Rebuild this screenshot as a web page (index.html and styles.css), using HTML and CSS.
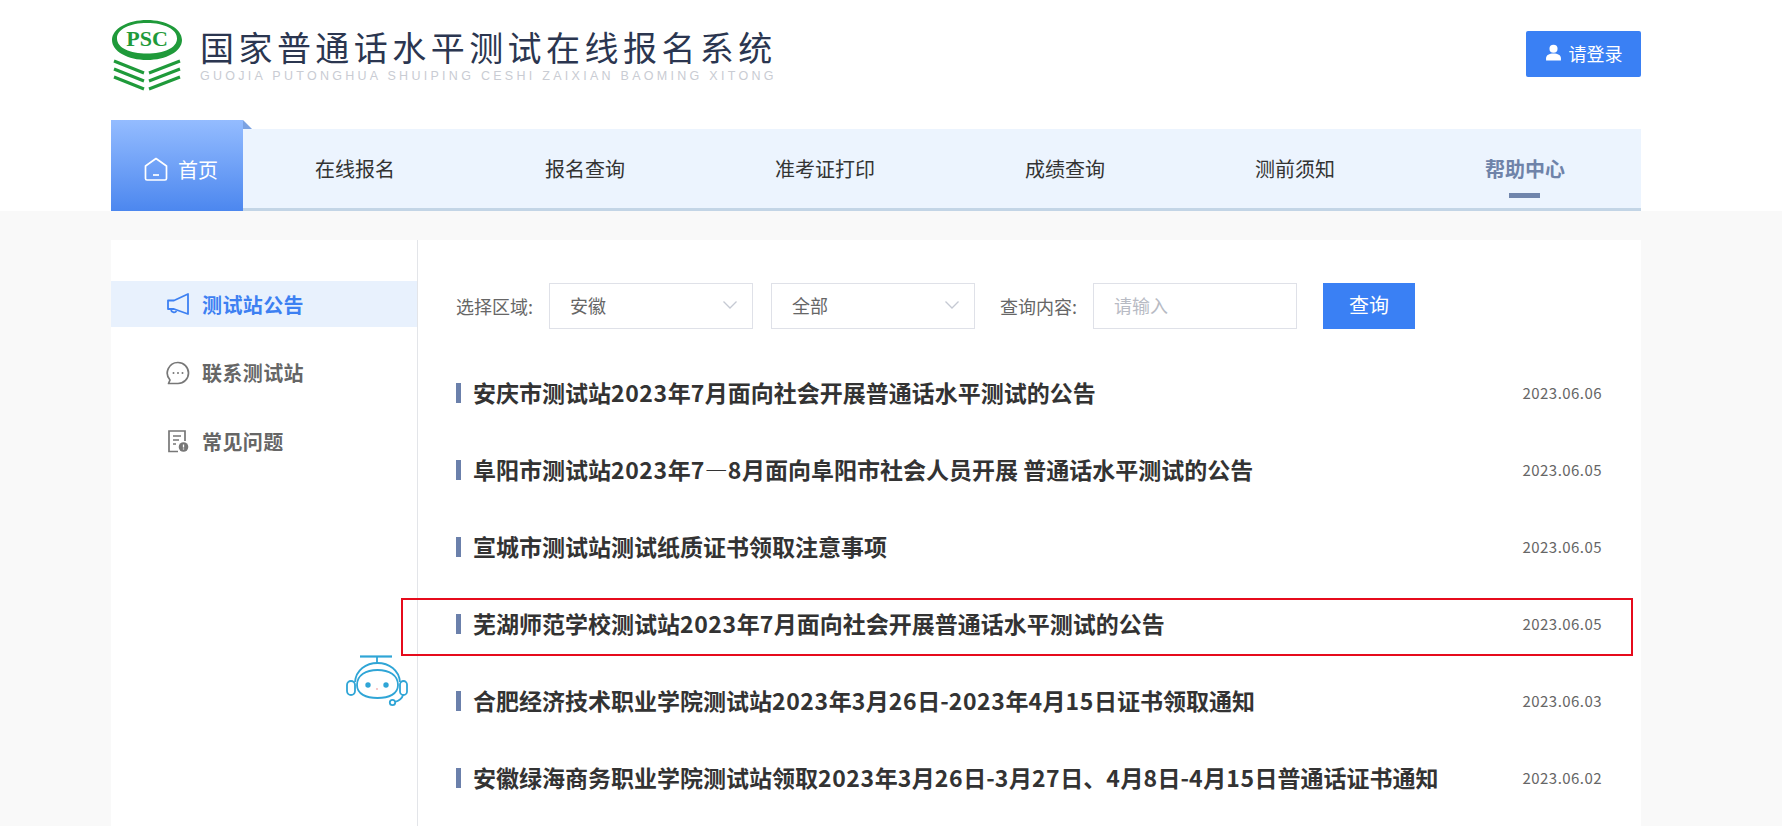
FILE: index.html
```html
<!DOCTYPE html>
<html lang="zh-CN">
<head>
<meta charset="utf-8">
<title>国家普通话水平测试在线报名系统</title>
<link rel="stylesheet" href="styles.css">
</head>
<body>
<header class="header">
  <div class="wrap">
    <div class="topbar">
      <div class="brand">
        <svg class="brand-mark" viewBox="0 0 72 72" width="72" height="72" aria-hidden="true">
          <path fill-rule="evenodd" fill="#1f9a3a" d="M36 1C17 1 1 9.500 1 21s16 20 35 20 35-8.500 35-20S55 1 36 1zm0 3c17 0 30 6 30 15.500S53 34.500 36 34.500 6 29 6 19.500 19 4 36 4z"/>
          <text class="brand-psc" x="36" y="27" text-anchor="middle">PSC</text>
          <g fill="none" stroke="#1f9a3a" stroke-width="3">
            <path d="M3 42l30 12M3 50l30 12M3 58l30 12M69 42L38 54M69 50L38 62M69 58L38 70"/>
          </g>
        </svg>
        <div class="brand-text">
          <div class="brand-cn">国家普通话水平测试在线报名系统</div>
          <div class="brand-en">GUOJIA PUTONGHUA SHUIPING CESHI ZAIXIAN BAOMING XITONG</div>
        </div>
      </div>
      <a class="login">
        <svg viewBox="0 0 16 16" width="17" height="17" aria-hidden="true"><circle cx="8" cy="4.500" r="3.800" fill="#fff"/><path fill="#fff" d="M1 15.500v-2C1 10.500 4 9 8 9s7 1.500 7 4.500v2z"/></svg>
        <span>请登录</span>
      </a>
    </div>
    <nav class="nav">
      <a class="nav-home">
        <svg viewBox="0 0 24 24" width="24" height="24" fill="none" stroke="#fff" stroke-width="1.700" aria-hidden="true"><path d="M12 1.500l10.500 7.500v12.500a1.500 1.500 0 0 1-1.500 1.500H3a1.500 1.500 0 0 1-1.500-1.500V9z" stroke-linejoin="round"/><path d="M9 18h6"/></svg>
        <span>首页</span>
      </a>
      <div class="nav-bar">
        <a class="nav-item">在线报名</a>
        <a class="nav-item">报名查询</a>
        <a class="nav-item">准考证打印</a>
        <a class="nav-item">成绩查询</a>
        <a class="nav-item">测前须知</a>
        <a class="nav-item nav-item-active">帮助中心</a>
      </div>
    </nav>
  </div>
</header>
<main class="wrap card">
  <aside class="side">
    <a class="side-item side-item-active">
      <svg viewBox="0 0 24 24" width="24" height="24" fill="none" stroke="#3d80f2" stroke-width="1.800" aria-hidden="true"><path d="M22 2v20L8 17H2V8.500h6z" stroke-linejoin="round"/><path d="M5 17.500a3 3 0 0 0 5.500 1.500"/></svg>
      <span>测试站公告</span>
    </a>
    <a class="side-item">
      <svg viewBox="0 0 24 24" width="24" height="24" fill="none" stroke="#777" stroke-width="1.700" aria-hidden="true"><path d="M12 1.500a10.500 10.500 0 1 1 0 21H2.500l1.500-3.500A10.500 10.500 0 0 1 12 1.500z" stroke-linejoin="round"/><g fill="#777" stroke="none"><circle cx="7.500" cy="12" r="1"/><circle cx="12" cy="12" r="1"/><circle cx="16.500" cy="12" r="1"/></g></svg>
      <span>联系测试站</span>
    </a>
    <a class="side-item">
      <svg viewBox="0 0 24 24" width="24" height="24" fill="none" stroke="#777" stroke-width="1.700" aria-hidden="true"><path d="M12 22.500H3V2h16v10"/><path d="M7 7h8M7 11h6M7 15h3"/><circle cx="17.500" cy="18" r="4.800" fill="#777" stroke="none"/><path d="M17.500 15.500v3M17.500 19.500v1" stroke="#fff" stroke-width="1.300"/></svg>
      <span>常见问题</span>
    </a>
  </aside>
  <section class="content">
    <form class="search">
      <label class="search-label">选择区域:</label>
      <div class="select">
        <span>安徽</span>
        <svg viewBox="0 0 14 8" width="14" height="8" fill="none" stroke="#c5c9d3" stroke-width="1.300" aria-hidden="true"><path d="M.5.500L7 7l6.500-6.500"/></svg>
      </div>
      <div class="select">
        <span>全部</span>
        <svg viewBox="0 0 14 8" width="14" height="8" fill="none" stroke="#c5c9d3" stroke-width="1.300" aria-hidden="true"><path d="M.5.500L7 7l6.500-6.500"/></svg>
      </div>
      <label class="search-label search-label-query">查询内容:</label>
      <input class="search-input" placeholder="请输入">
      <button class="search-btn" type="button">查询</button>
    </form>
    <ul class="list">
      <li class="row"><span class="row-title">安庆市测试站<span class="num">2023</span>年<span class="num">7</span>月面向社会开展普通话水平测试的公告</span><span class="row-date">2023.06.06</span></li>
      <li class="row"><span class="row-title">阜阳市测试站<span class="num">2023</span>年<span class="num">7</span>—<span class="num">8</span>月面向阜阳市社会人员开展 普通话水平测试的公告</span><span class="row-date">2023.06.05</span></li>
      <li class="row"><span class="row-title">宣城市测试站测试纸质证书领取注意事项</span><span class="row-date">2023.06.05</span></li>
      <li class="row"><span class="row-title">芜湖师范学校测试站<span class="num">2023</span>年<span class="num">7</span>月面向社会开展普通话水平测试的公告</span><span class="row-date">2023.06.05</span></li>
      <li class="row"><span class="row-title">合肥经济技术职业学院测试站<span class="num">2023</span>年<span class="num">3</span>月<span class="num">26</span>日-<span class="num">2023</span>年<span class="num">4</span>月<span class="num">15</span>日证书领取通知</span><span class="row-date">2023.06.03</span></li>
      <li class="row"><span class="row-title">安徽绿海商务职业学院测试站领取<span class="num">2023</span>年<span class="num">3</span>月<span class="num">26</span>日-<span class="num">3</span>月<span class="num">27</span>日、<span class="num">4</span>月<span class="num">8</span>日-<span class="num">4</span>月<span class="num">15</span>日普通话证书通知</span><span class="row-date">2023.06.02</span></li>
    </ul>
  </section>
</main>
<div class="highlight"></div>
<svg class="robot" viewBox="0 0 62 52" width="62" height="52" fill="none" stroke="#2fa5d6" stroke-width="1.800" aria-hidden="true">
  <path d="M14 1.500h32" stroke-width="2.200"/>
  <path d="M31 2v6"/>
  <path d="M9 27C10 15 20 8 31.500 8S53 15 54 27"/>
  <path d="M11 30C11 20 20 15 31.500 15S52 20 52 30C52 39 43 43 31.500 43S11 39 11 30z"/>
  <rect x="1" y="26" width="8" height="14" rx="4"/>
  <rect x="54" y="26" width="7" height="14" rx="3.500"/>
  <path d="M57 40C56 44 52 46 49 47"/>
  <circle cx="46.500" cy="47.500" r="2.700"/>
  <g fill="#2fa5d6" stroke="none"><circle cx="22" cy="30" r="2.700"/><circle cx="40" cy="30" r="2.700"/></g>
  <circle cx="31" cy="34" r="1" fill="#f5b5b5" stroke="none"/>
</svg>
</body>
</html>
```
FILE: styles.css
```css
* { box-sizing: border-box; }
html, body { margin: 0; height: 100%; overflow: hidden; }
body {
  background: #f9f9f9;
  font-family: "Noto Sans CJK SC", "Noto Sans", sans-serif;
  color: #333;
  position: relative;
}
ul { margin: 0; padding: 0; list-style: none; }
.wrap { width: 1530px; margin-left: 111px; }
.header { background: #fff; height: 211px; }
.topbar { height: 120px; display: flex; justify-content: space-between; align-items: flex-start; }
.brand { display: flex; align-items: flex-start; padding-top: 19px; }
.brand-mark { display: block; }
.brand-psc { font-family: "Liberation Serif", serif; font-weight: 700; font-size: 22px; fill: #1f9a3a; }
.brand-text { margin-left: 17px; }
.brand-cn { font-size: 34px; line-height: 38px; letter-spacing: 4.450px; color: #2b3650; white-space: nowrap; margin-top: 9px; }
.brand-en { font-family: "Liberation Sans", sans-serif; font-size: 12.500px; line-height: 14px; letter-spacing: 3.280px; color: #c9ccd3; white-space: nowrap; margin-top: 3px; }
.login {
  margin-top: 31px; width: 115px; height: 46px; background: #3a80f4; border-radius: 2px;
  display: flex; align-items: center; justify-content: center; gap: 7px;
  color: #fff; font-size: 18px; padding-bottom: 3px;
}
.nav { display: flex; height: 91px; }
.nav-home {
  width: 132px; background: linear-gradient(#94bcff, #4c87ef); color: #fff; font-size: 20px;
  display: flex; align-items: center; gap: 10px; padding: 7px 0 0 33px; position: relative;
}
.nav-home::after {
  content: ""; position: absolute; left: 100%; top: 0;
  border-style: solid; border-width: 9px 0 0 9px; border-color: transparent transparent transparent #7ba2e2;
}
.nav-bar {
  flex: 1; margin-top: 9px; background: #ecf4fe; border-bottom: 3px solid #c3d5e6;
  display: flex; justify-content: space-between; padding: 0 76px 0 72px;
}
.nav-item { display: flex; align-items: center; font-size: 20px; color: #333; position: relative; }
.nav-item-active { color: #6f83a9; font-weight: 700; }
.nav-item-active::after {
  content: ""; position: absolute; left: 50%; margin-left: -16px; bottom: 10px; width: 31px; height: 5px; background: #7085ac;
}
.card { background: #fff; margin-top: 29px; height: 600px; display: flex; padding-top: 41px; }
.side { width: 307px; border-right: 1px solid #e3e5e9; margin-top: -41px; padding-top: 41px; flex: none; }
.side-item {
  height: 46px; margin-bottom: 22.500px; display: flex; align-items: center; gap: 12px;
  padding-left: 55px; font-size: 20px; letter-spacing: .4px; font-weight: 700; color: #666;
}
.side-item-active { background: #e8f1fd; color: #3d80f2; }
.content { flex: 1; padding: 2px 39px 0 38px; min-width: 0; }
.search { display: flex; align-items: center; height: 46px; margin: 0 0 25px; }
.search-label { font-size: 18px; color: #666; white-space: nowrap; width: 93px; }
.search-label-query { margin-left: 7px; }
.select {
  width: 204px; height: 46px; border: 1px solid #dfe1e8; margin-right: 18px;
  display: flex; align-items: center; justify-content: space-between; padding: 0 15px 2px 20px;
  font-size: 18px; color: #666;
}
.search-input {
  width: 204px; height: 46px; border: 1px solid #dfe1e8; padding: 0 20px 2px; outline: 0;
  font: 18px "Noto Sans CJK SC", sans-serif; color: #666; background: #fff;
}
.search-input::placeholder { color: #b8bbc4; opacity: 1; }
.search-btn {
  margin-left: 26px; width: 92px; height: 46px; border: 0; background: #3a80f4; color: #fff;
  font: 20px "Noto Sans CJK SC", sans-serif; padding: 0 0 3px;
}
.row { height: 77px; display: flex; align-items: center; justify-content: space-between; }
.row-title {
  font-size: 23px; font-weight: 700; color: #333; line-height: 18px; height: 20px;
  border-left: 5px solid #6b80ab; padding-left: 12px; white-space: nowrap;
}
.num { letter-spacing: .6px; }
.row-date { font-size: 15px; letter-spacing: .45px; color: #666; }
.highlight { position: absolute; left: 401px; top: 598px; width: 1232px; height: 58px; border: 2px solid #e60b1c; }
.robot { position: absolute; left: 346px; top: 655px; }
```
